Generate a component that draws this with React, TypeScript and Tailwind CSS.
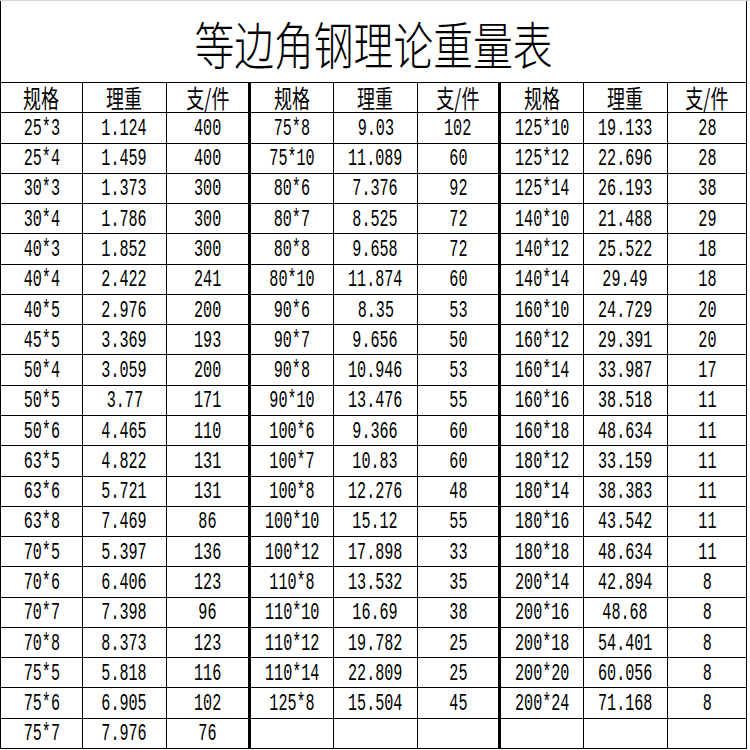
const GROUP_A: [string, string, string][] = [
  ["25*3", "1.124", "400"],
  ["25*4", "1.459", "400"],
  ["30*3", "1.373", "300"],
  ["30*4", "1.786", "300"],
  ["40*3", "1.852", "300"],
  ["40*4", "2.422", "241"],
  ["40*5", "2.976", "200"],
  ["45*5", "3.369", "193"],
  ["50*4", "3.059", "200"],
  ["50*5", "3.77", "171"],
  ["50*6", "4.465", "110"],
  ["63*5", "4.822", "131"],
  ["63*6", "5.721", "131"],
  ["63*8", "7.469", "86"],
  ["70*5", "5.397", "136"],
  ["70*6", "6.406", "123"],
  ["70*7", "7.398", "96"],
  ["70*8", "8.373", "123"],
  ["75*5", "5.818", "116"],
  ["75*6", "6.905", "102"],
  ["75*7", "7.976", "76"],
];

const GROUP_B: [string, string, string][] = [
  ["75*8", "9.03", "102"],
  ["75*10", "11.089", "60"],
  ["80*6", "7.376", "92"],
  ["80*7", "8.525", "72"],
  ["80*8", "9.658", "72"],
  ["80*10", "11.874", "60"],
  ["90*6", "8.35", "53"],
  ["90*7", "9.656", "50"],
  ["90*8", "10.946", "53"],
  ["90*10", "13.476", "55"],
  ["100*6", "9.366", "60"],
  ["100*7", "10.83", "60"],
  ["100*8", "12.276", "48"],
  ["100*10", "15.12", "55"],
  ["100*12", "17.898", "33"],
  ["110*8", "13.532", "35"],
  ["110*10", "16.69", "38"],
  ["110*12", "19.782", "25"],
  ["110*14", "22.809", "25"],
  ["125*8", "15.504", "45"],
];

const GROUP_C: [string, string, string][] = [
  ["125*10", "19.133", "28"],
  ["125*12", "22.696", "28"],
  ["125*14", "26.193", "38"],
  ["140*10", "21.488", "29"],
  ["140*12", "25.522", "18"],
  ["140*14", "29.49", "18"],
  ["160*10", "24.729", "20"],
  ["160*12", "29.391", "20"],
  ["160*14", "33.987", "17"],
  ["160*16", "38.518", "11"],
  ["160*18", "48.634", "11"],
  ["180*12", "33.159", "11"],
  ["180*14", "38.383", "11"],
  ["180*16", "43.542", "11"],
  ["180*18", "48.634", "11"],
  ["200*14", "42.894", "8"],
  ["200*16", "48.68", "8"],
  ["200*18", "54.401", "8"],
  ["200*20", "60.056", "8"],
  ["200*24", "71.168", "8"],
];

const HEADERS = ["规格", "理重", "支/件"];

function Cell({ text, col, header }: { text: string; col: number; header?: boolean }) {
  // thick divider after the 3rd and 6th columns
  const edge = col === 2 || col === 5 ? "border-r-[3px]" : "border-r";
  return (
    <div className={`flex items-center justify-center overflow-visible border-b border-black ${edge}`}>
      {header ? (
        <span className="inline-block scale-x-[0.72] whitespace-nowrap font-['Noto_Sans_CJK_SC',sans-serif] text-[25px] leading-none">
          {text}
        </span>
      ) : (
        <span className="inline-block translate-y-[1px] scale-x-[0.63] whitespace-nowrap font-['Liberation_Mono',monospace] text-[24px] leading-none">
          {text}
        </span>
      )}
    </div>
  );
}

export default function App() {
  const rows: string[][] = [];
  for (let i = 0; i < 21; i++) {
    const a = GROUP_A[i] ?? ["", "", ""];
    const b = GROUP_B[i] ?? ["", "", ""];
    const c = GROUP_C[i] ?? ["", "", ""];
    rows.push([...a, ...b, ...c]);
  }

  return (
    <div className="h-[750px] w-[750px] overflow-hidden border-t border-[#d6d6d6] bg-white text-black">
      <div className="w-[747px] border-l border-black">
        <div className="flex h-[82px] items-center justify-center border-r border-b border-black">
          <span className="inline-block translate-y-[2px] scale-x-[0.78] whitespace-nowrap font-['Noto_Sans_CJK_SC',sans-serif] text-[51px] font-light leading-none">
            等边角钢理论重量表
          </span>
        </div>
        <div className="grid h-[666px] grid-cols-[82px_84px_84px_83px_84px_83px_83px_84px_79px] grid-rows-[repeat(22,minmax(0,1fr))]">
          {[...HEADERS, ...HEADERS, ...HEADERS].map((h, i) => (
            <Cell key={"h" + i} text={h} col={i} header />
          ))}
          {rows.map((row, r) =>
            row.map((v, i) => <Cell key={r + "-" + i} text={v} col={i} />)
          )}
        </div>
      </div>
    </div>
  );
}
